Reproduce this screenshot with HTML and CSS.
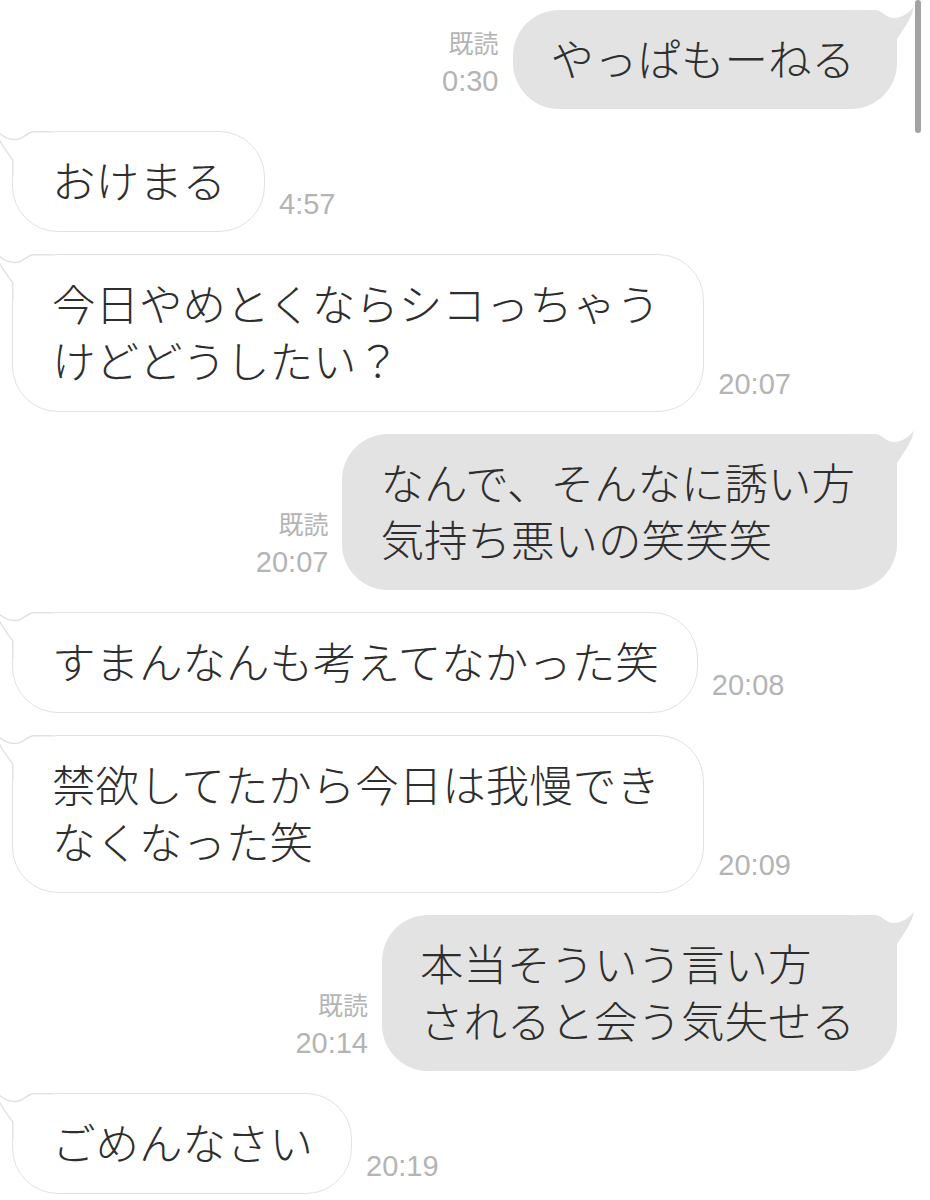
FILE: index.html
```html
<!DOCTYPE html>
<html lang="ja">
<head>
  <meta charset="UTF-8" />
  <meta name="viewport" content="width=device-width, initial-scale=1.0"/>
  <title>トーク</title>
  <link rel="stylesheet" href="styles.css">
</head>
<body>
  <!-- bubble tails, reused by every message -->
  <svg class="defs" width="0" height="0">
    <symbol id="tail-out" viewBox="0 0 58 50">
      <path d="M0,4 L18,4 C25,4 29,12 36,12 C46,12 53,6 57,0.5 C55,12 47,22 40,33 L40,50 L0,50 Z" fill="#e3e3e3"/>
    </symbol>
    <symbol id="tail-in" viewBox="0 0 58 50">
      <path d="M0,4 L18,4 C25,4 29,12 36,12 C46,12 53,6 57,0.5 C55,12 47,22 40,33 L40,50 L0,50 Z" fill="#fff"/>
      <path d="M0,4.75 L18,4.75 C25,4.75 29,12.6 36,12.6 C46,12.6 53,6.6 57,1.2 C55,12 47,22 39.25,33 L39.25,50" fill="none" stroke="#e2e2e2" stroke-width="1.5"/>
    </symbol>
  </svg>

  <div class="scrollbar"></div>

  <div class="chat">
    <div class="row out">
      <div class="meta"><span class="read">既読</span><span>0:30</span></div>
      <div class="bubble">やっぱもーねる<svg class="tail"><use href="#tail-out"/></svg></div>
    </div>

    <div class="row in">
      <div class="bubble">おけまる<svg class="tail"><use href="#tail-in"/></svg></div>
      <div class="meta"><span>4:57</span></div>
    </div>

    <div class="row in">
      <div class="bubble">今日やめとくならシコっちゃうけどどうしたい？<svg class="tail"><use href="#tail-in"/></svg></div>
      <div class="meta"><span>20:07</span></div>
    </div>

    <div class="row out">
      <div class="meta"><span class="read">既読</span><span>20:07</span></div>
      <div class="bubble">なんで、そんなに誘い方<br>気持ち悪いの笑笑笑<svg class="tail"><use href="#tail-out"/></svg></div>
    </div>

    <div class="row in">
      <div class="bubble">すまんなんも考えてなかった笑<svg class="tail"><use href="#tail-in"/></svg></div>
      <div class="meta"><span>20:08</span></div>
    </div>

    <div class="row in">
      <div class="bubble">禁欲してたから今日は我慢できなくなった笑<svg class="tail"><use href="#tail-in"/></svg></div>
      <div class="meta"><span>20:09</span></div>
    </div>

    <div class="row out">
      <div class="meta"><span class="read">既読</span><span>20:14</span></div>
      <div class="bubble">本当そういう言い方<br>されると会う気失せる<svg class="tail"><use href="#tail-out"/></svg></div>
    </div>

    <div class="row in">
      <div class="bubble">ごめんなさい<svg class="tail"><use href="#tail-in"/></svg></div>
      <div class="meta"><span>20:19</span></div>
    </div>
  </div>
</body>
</html>
```

FILE: styles.css
```css
body {
  margin: 0;
  background: #fff;
  font-family: "Noto Sans CJK JP", sans-serif;
  overflow: hidden;
}
.defs { position: absolute; }

.scrollbar {
  position: absolute;
  top: 0;
  right: 9px;
  width: 6px;
  height: 133px;
  background: #a2a2a2;
  border-radius: 3px;
  z-index: 2;
}

.chat {
  display: flex;
  flex-direction: column;
  gap: 22px;
  padding-top: 10px;
}

.row {
  display: flex;
  align-items: flex-end;
  gap: 14px;
}
.row.out {
  justify-content: flex-end;
  padding-right: 33px;
}
.row.in { padding-left: 12px; }

.bubble {
  position: relative;
  font-size: 43.5px;
  font-weight: 300;
  line-height: 57px;
  color: #2e2e2e;
  border-radius: 46px;
}
.out .bubble {
  background: #e3e3e3;
  padding: 19px 42px 23px 38px;
}
.in .bubble {
  background: #fff;
  border: 1.5px solid #e2e2e2;
  padding: 19px 38px 23px 39px;
  max-width: 14.1em;
}

.tail {
  position: absolute;
  width: 58px;
  height: 50px;
}
.out .tail {
  top: -4px;
  right: -18px;
}
.in .tail {
  top: -5.5px;
  left: -19.5px;
  transform: scaleX(-1);
}

.meta {
  display: flex;
  flex-direction: column;
  align-items: flex-end;
  margin-bottom: 10px;
  font-family: "Liberation Sans", "Noto Sans CJK JP", sans-serif;
  font-size: 29px;
  line-height: 36px;
  color: #b4b4b4;
}
.meta .read {
  font-size: 25px;
  margin-bottom: 1px;
}
```
